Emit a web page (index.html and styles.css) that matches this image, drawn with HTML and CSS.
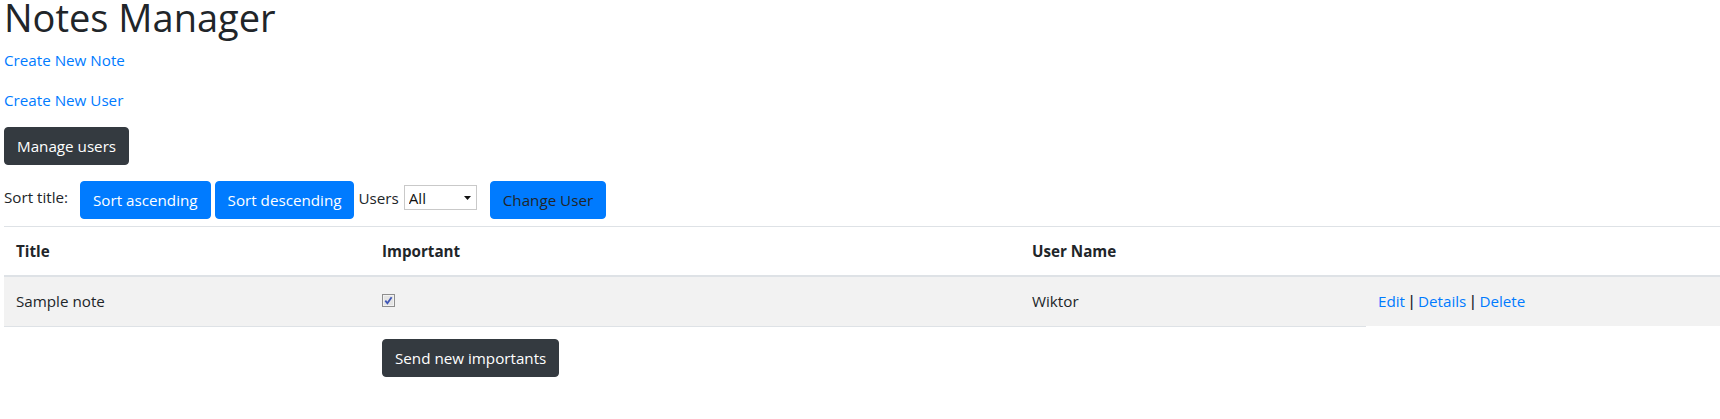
FILE: index.html
```html
<!DOCTYPE html>
<html lang="en">
<head>
<meta charset="utf-8">
<title>Notes Manager</title>
<link rel="stylesheet" href="styles.css">
</head>
<body>
<div class="page">
  <h1 class="title">Notes Manager</h1>
  <p class="link-line"><a href="#">Create New Note</a></p>
  <p class="link-line link-line-last"><a href="#">Create New User</a></p>
  <div class="manage">
    <button class="btn btn-dark" type="button">Manage users</button>
  </div>
  <div class="toolbar">
    <span class="sort-label">Sort title:</span>
    <button class="btn btn-primary" type="button">Sort ascending</button>
    <button class="btn btn-primary" type="button">Sort descending</button>
    <span class="users-label">Users</span>
    <span class="select-wrap">
      <select class="user-select"><option>All</option></select>
      <svg class="select-arrow" width="7" height="4" viewBox="0 0 7 4"><path d="M0 0 H7 L3.5 4 Z" fill="#111"/></svg>
    </span>
    <button class="btn btn-primary btn-change" type="button">Change User</button>
  </div>
  <table class="notes">
    <colgroup>
      <col class="col-title">
      <col class="col-important">
      <col class="col-user">
      <col class="col-actions">
    </colgroup>
    <thead>
      <tr>
        <th>Title</th>
        <th>Important</th>
        <th>User Name</th>
        <th></th>
      </tr>
    </thead>
    <tbody>
      <tr class="striped">
        <td>Sample note</td>
        <td>
          <svg class="chk" width="13" height="13" viewBox="0 0 13 13">
            <rect x="0.5" y="0.5" width="12" height="12" fill="#dcdcdc" stroke="#8e8e8e"/>
            <rect x="1.5" y="1.5" width="10" height="10" fill="#e4e4e4" stroke="#f2f2f2"/>
            <path d="M3.3 6.6 L5.4 9.2 L9.6 3.2" fill="none" stroke="#3f56b6" stroke-width="1.8"/>
          </svg>
        </td>
        <td>Wiktor</td>
        <td class="actions"><a href="#">Edit</a><span class="sep"> | </span><a href="#">Details</a><span class="sep"> | </span><a href="#">Delete</a></td>
      </tr>
      <tr class="send-row">
        <td></td>
        <td><button class="btn btn-dark" type="button">Send new importants</button></td>
        <td></td>
      </tr>
    </tbody>
  </table>
</div>
</body>
</html>
```
FILE: styles.css
```css
html, body {
  margin: 0;
  padding: 0;
  background: #fff;
  overflow: hidden;
}

body {
  font-family: "Open Sans", "Liberation Sans", sans-serif;
  font-size: 15.2px;
  line-height: 24px;
  color: #212529;
}

.page {
  padding-left: 4px;
}

.title {
  font-size: 38px;
  font-weight: 400;
  line-height: 35px;
  margin: 0 0 13px;
}

.link-line {
  margin: 0 0 16px;
}

.link-line-last {
  margin-bottom: 15px;
}

a {
  color: #007bff;
  text-decoration: none;
}

.sep {
  font-family: "Liberation Sans", sans-serif;
  font-size: 16px;
}

.manage {
  margin-bottom: 16px;
}

.btn {
  display: inline-block;
  font-family: inherit;
  font-size: 15.2px;
  line-height: 24px;
  padding: 6px 12px;
  border: 1px solid transparent;
  border-radius: 4px;
  cursor: pointer;
  font-weight: 400;
}

.btn-dark {
  background: #343a40;
  border-color: #343a40;
  color: #fff;
}

.btn-primary {
  background: #007bff;
  border-color: #007bff;
  color: #fff;
}

.btn-change {
  color: #212529;
  margin-left: 9px;
}

.toolbar {
  display: flex;
  align-items: flex-start;
  gap: 4px;
  margin-bottom: 7px;
}

.sort-label {
  margin-top: 4px;
  margin-right: 8px;
}

.users-label {
  margin-top: 5px;
}

.select-wrap {
  position: relative;
  display: inline-block;
  margin-top: 4px;
  margin-left: 1px;
}

.user-select {
  -webkit-appearance: none;
  appearance: none;
  width: 73px;
  height: 25px;
  border: 1px solid #c9c9c9;
  border-radius: 0;
  background: #fff;
  padding: 0 0 0 4px;
  font-family: inherit;
  font-size: 15.2px;
  color: #111;
  display: block;
}

.select-arrow {
  position: absolute;
  right: 6px;
  top: 11px;
}

.notes {
  width: 1716px;
  border-collapse: collapse;
  table-layout: fixed;
}

.col-title { width: 366px; }
.col-important { width: 650px; }
.col-user { width: 346px; }

.notes th,
.notes td {
  padding: 12px;
  text-align: left;
  vertical-align: top;
  border-top: 1px solid #dee2e6;
}

.notes thead th {
  font-weight: 700;
  border-bottom: 2px solid #dee2e6;
  vertical-align: bottom;
}

.striped td {
  background: #f2f2f2;
}

.chk {
  display: block;
  margin-top: 5px;
}
```
